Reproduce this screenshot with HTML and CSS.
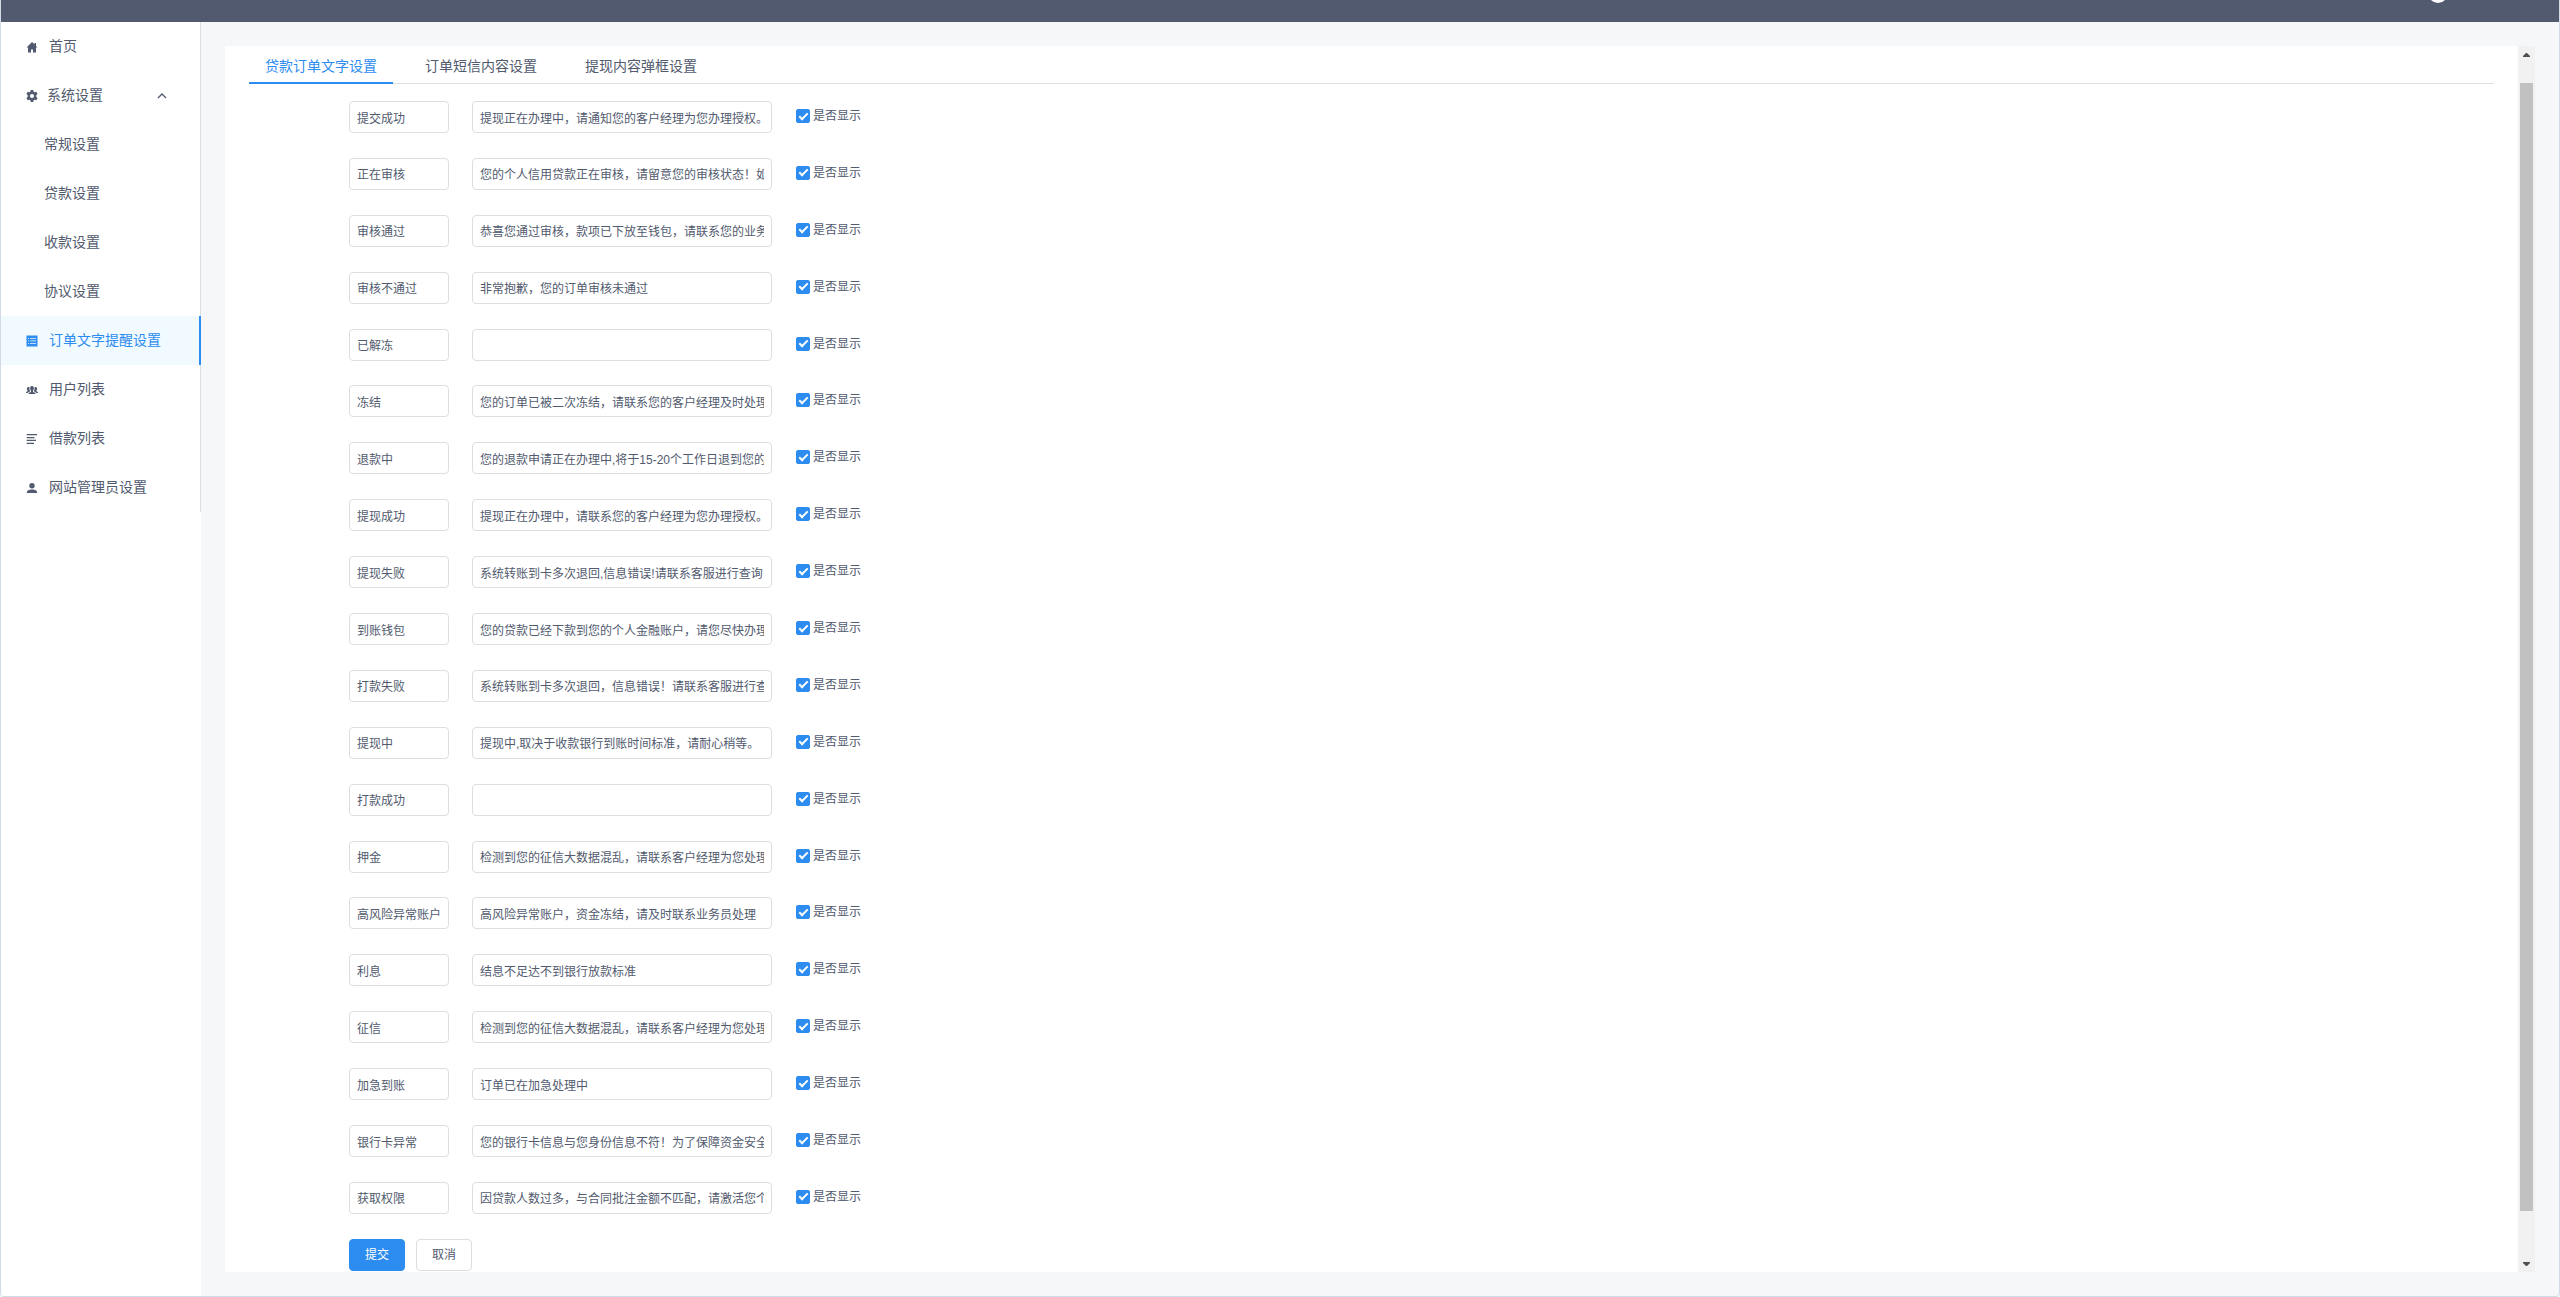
FILE: index.html
```html
<!DOCTYPE html>
<html lang="zh-CN">
<head>
    <meta charset="UTF-8">
    <meta name="viewport" content="width=device-width, initial-scale=1.0">
    <title>订单文字提醒设置</title>
    <link rel="stylesheet" href="styles.css">
</head>
<body>

<div class="layout">
    <header class="header">
        <span class="avatar"></span>
    </header>

    <div class="main">
        <!-- 侧边菜单 -->
        <aside class="sider">
            <nav class="menu">
                <a href="#" class="menu-item">
                    <svg class="icon" viewBox="0 0 12 12"><path d="M6 1 .5 6.500H2v5h3v-3h2v3h3v-5h1.500L10 5V2H8.500v1.300z"/></svg>
                    <span>首页</span>
                </a>
                <a href="#" class="menu-item menu-parent">
                    <svg class="icon" viewBox="0 0 12 12"><path fill-rule="evenodd" d="M4.700 0h2.600l.3 1.700 1.100.6 1.600-.6 1.300 2.300-1.300 1.100v1.800l1.300 1.100-1.300 2.300-1.600-.6-1.100.6-.3 1.700H4.700l-.3-1.700-1.100-.6-1.600.6L.4 8l1.300-1.100V5.100L.4 4l1.300-2.300 1.600.6 1.100-.6zM6 3.900a2.100 2.100 0 1 0 0 4.200 2.100 2.100 0 0 0 0-4.200z"/></svg>
                    <span>系统设置</span>
                    <svg class="arrow" viewBox="0 0 10 6"><path d="M1 5l4-4 4 4"/></svg>
                </a>
                <a href="#" class="menu-item menu-sub">常规设置</a>
                <a href="#" class="menu-item menu-sub">贷款设置</a>
                <a href="#" class="menu-item menu-sub">收款设置</a>
                <a href="#" class="menu-item menu-sub">协议设置</a>
                <a href="#" class="menu-item active">
                    <svg class="icon" viewBox="0 0 12 12"><path fill-rule="evenodd" d="M.5.500h11v11H.500zM2 3v.7h1V3zm2 0v.7h6V3zM2 5.600v.7h1v-.7zm2 0v.7h6v-.7zM2 8.200v.7h1v-.7zm2 0v.7h6v-.7z"/></svg>
                    <span>订单文字提醒设置</span>
                </a>
                <a href="#" class="menu-item">
                    <svg class="icon" viewBox="0 0 12 12"><path d="M6 2c1.200 0 1.900.9 1.900 2.100S7.300 6.500 7 6.800V8c1 .4 2.500.6 2.500 2h-7c0-1.400 1.500-1.600 2.500-2V6.800c-.3-.3-.9-1.500-.9-2.700S4.800 2 6 2zM2.500 3c.5 0 .8.1 1 .4-.2 1.600.1 2.600.6 3.500v.7C3 8 2.200 8.300 1.900 9H0c0-1.100.8-1.400 1.600-1.700v-.8C1 6 .9 5.500.9 4.800c0-1 .6-1.800 1.600-1.800zM9.500 3c-.5 0-.8.1-1 .4.2 1.600-.1 2.600-.6 3.500v.7c1.100.4 1.900.7 2.200 1.400H12c0-1.100-.8-1.400-1.600-1.700v-.8c.6-.5.7-1 .7-1.700 0-1-.6-1.800-1.600-1.800z"/></svg>
                    <span>用户列表</span>
                </a>
                <a href="#" class="menu-item">
                    <svg class="icon" viewBox="0 0 12 12"><path d="M.7 1h10.300v1.300H.700zM.7 3.900h7.800v1.300H.700zM.7 6.800h9.300v1.300H.700zM.7 9.700h7.300v1.300H.700z"/></svg>
                    <span>借款列表</span>
                </a>
                <a href="#" class="menu-item">
                    <svg class="icon" viewBox="0 0 12 12"><path d="M6 1a2.700 2.700 0 0 1 0 5.400A2.700 2.700 0 0 1 6 1zM.7 11c0-2.600 2.300-3.600 5.300-3.600s5.300 1 5.300 3.600z"/></svg>
                    <span>网站管理员设置</span>
                </a>
            </nav>
        </aside>

        <main class="content">
            <div class="panel">
                <div class="tabs">
                    <button type="button" class="tab current">贷款订单文字设置</button>
                    <button type="button" class="tab">订单短信内容设置</button>
                    <button type="button" class="tab">提现内容弹框设置</button>
                </div>

                <form class="form" id="textForm">
                    <div class="actions">
                        <button type="submit" class="btn btn-primary">提交</button>
                        <button type="button" class="btn">取消</button>
                    </div>
                </form>
            </div>

            <!-- 滚动条 -->
            <div class="scrollbar">
                <button type="button" class="scroll-btn" aria-label="向上滚动"><svg viewBox="0 0 7 4"><path d="M0 4V3l3-3h1l3 3v1z"/></svg></button>
                <div class="thumb"></div>
                <button type="button" class="scroll-btn" aria-label="向下滚动"><svg viewBox="0 0 7 4"><path d="M0 0v1l3 3h1l3-3V0z"/></svg></button>
            </div>
        </main>
    </div>
</div>

<script src="script.js"></script>
</body>
</html>
```

FILE: styles.css
```css
* {
    box-sizing: border-box;
}

body {
    margin: 0;
    font-family: "Liberation Sans", "Noto Sans CJK SC", sans-serif;
    font-size: 12px;
    line-height: 18px;
    color: #515a6e;
}

button,
input {
    font: inherit;
    color: inherit;
    margin: 0;
}

button {
    cursor: pointer;
}

.layout {
    display: flex;
    flex-direction: column;
    height: 100vh;
    border: 1px solid #d3dce6;
    border-top: none;
    border-radius: 0 0 4px 4px;
    background: #f5f7f9;
    overflow: hidden;
}

/* 顶部 */
.header {
    display: flex;
    justify-content: flex-end;
    align-items: flex-end;
    flex: none;
    height: 22px;
    padding: 0 111px 19px 0;
    background: #515a6e;
    overflow: hidden;
}

.avatar {
    flex: none;
    width: 20px;
    height: 20px;
    border-radius: 50%;
    background: #fff;
}

.main {
    display: flex;
    flex: 1;
    min-height: 0;
}

/* 菜单 */
.sider {
    flex: none;
    width: 200px;
    background: #fff;
}

.menu {
    border-right: 1px solid #dcdee2;
}

.menu-item {
    display: flex;
    align-items: center;
    height: 49px;
    padding: 0 24px 0 25px;
    font-size: 14px;
    line-height: 21px;
    color: #515a6e;
    text-decoration: none;
}

.icon {
    width: 12px;
    height: 12px;
    margin-right: 11px;
    fill: currentColor;
}

.menu-parent .icon {
    margin-right: 9px;
}

.menu-sub {
    padding-left: 43px;
}

.arrow {
    width: 10px;
    height: 6px;
    margin-left: auto;
    margin-right: 9px;
    fill: none;
    stroke: currentColor;
    stroke-width: 1.3;
}

.menu-item.active {
    margin-right: -1px;
    border-right: 2px solid #2d8cf0;
    background: #f0faff;
    color: #2d8cf0;
}

/* 内容 */
.content {
    display: flex;
    flex: 1;
    min-width: 0;
    padding: 24px;
}

.panel {
    display: flex;
    flex-direction: column;
    flex: 1;
    min-width: 0;
    padding: 0 24px 1px;
    background: #fff;
    overflow: auto;
    scrollbar-width: none;
}

.tabs {
    display: flex;
    flex: none;
    gap: 16px;
    height: 38px;
    border-bottom: 1px solid #dcdee2;
}

.tab {
    height: 38px;
    padding: 4px 16px 0;
    border: none;
    border-bottom: 2px solid transparent;
    background: none;
    font-size: 14px;
    line-height: 21px;
}

.tab.current {
    border-color: #2d8cf0;
    color: #2d8cf0;
}

.form {
    display: flex;
    flex-direction: column;
    flex: 1;
    justify-content: space-between;
    gap: 24px;
    padding: 17px 0 0 100px;
}

.row {
    display: flex;
    gap: 23px;
}

.input {
    height: 32px;
    padding: 4px 7px;
    border: 1px solid #dcdee2;
    border-radius: 4px;
    background: #fff;
}

.input:focus {
    border-color: #57a3f3;
    outline: none;
}

.name {
    width: 100px;
}

.text {
    width: 300px;
}

.check {
    display: flex;
    align-items: center;
    gap: 3px;
    height: 30px;
    padding-left: 1px;
    cursor: pointer;
}

.check input {
    display: grid;
    place-items: center;
    width: 14px;
    height: 14px;
    border: 1px solid #dcdee2;
    border-radius: 2px;
    appearance: none;
}

.check input:checked {
    border-color: #2d8cf0;
    background: #2d8cf0;
}

.check input:checked::after {
    content: "";
    box-sizing: border-box;
    width: 5px;
    height: 9px;
    margin-bottom: 2px;
    border: solid #fff;
    border-width: 0 2px 2px 0;
    transform: rotate(45deg);
}

.actions {
    display: flex;
    gap: 11px;
}

.btn {
    height: 32px;
    padding: 0 15px;
    border: 1px solid #dcdee2;
    border-radius: 4px;
    background: #fff;
}

.btn-primary {
    border-color: #2d8cf0;
    background: #2d8cf0;
    color: #fff;
}

.scrollbar {
    display: flex;
    flex-direction: column;
    flex: none;
    width: 17px;
    background: #f1f1f1;
}

.scroll-btn {
    display: grid;
    place-items: center;
    height: 17px;
    padding: 0;
    border: none;
    background: none;
}

.scroll-btn svg {
    width: 7px;
    height: 4px;
    fill: #505050;
}

.thumb {
    flex: 1;
    margin: 20px 2px 44px;
    background: #c1c1c1;
}
```

FILE: script.js
```js
const rows = [
    ["提交成功", "提现正在办理中，请通知您的客户经理为您办理授权。"],
    ["正在审核", "您的个人信用贷款正在审核，请留意您的审核状态！如"],
    ["审核通过", "恭喜您通过审核，款项已下放至钱包，请联系您的业务"],
    ["审核不通过", "非常抱歉，您的订单审核未通过"],
    ["已解冻", ""],
    ["冻结", "您的订单已被二次冻结，请联系您的客户经理及时处理"],
    ["退款中", "您的退款申请正在办理中,将于15-20个工作日退到您的"],
    ["提现成功", "提现正在办理中，请联系您的客户经理为您办理授权。"],
    ["提现失败", "系统转账到卡多次退回,信息错误!请联系客服进行查询"],
    ["到账钱包", "您的贷款已经下款到您的个人金融账户，请您尽快办理"],
    ["打款失败", "系统转账到卡多次退回，信息错误！请联系客服进行查"],
    ["提现中", "提现中,取决于收款银行到账时间标准，请耐心稍等。"],
    ["打款成功", ""],
    ["押金", "检测到您的征信大数据混乱，请联系客户经理为您处理"],
    ["高风险异常账户", "高风险异常账户，资金冻结，请及时联系业务员处理"],
    ["利息", "结息不足达不到银行放款标准"],
    ["征信", "检测到您的征信大数据混乱，请联系客户经理为您处理"],
    ["加急到账", "订单已在加急处理中"],
    ["银行卡异常", "您的银行卡信息与您身份信息不符！为了保障资金安全"],
    ["获取权限", "因贷款人数过多，与合同批注金额不匹配，请激活您个"]
];

const form = document.getElementById("textForm");
const actions = form.querySelector(".actions");

rows.forEach(([name, text], i) => {
    const row = document.createElement("div");
    row.className = "row";
    row.innerHTML = `
        <input type="text" class="input name" name="name${i}" aria-label="状态名称" value="${name}">
        <input type="text" class="input text" name="text${i}" aria-label="提醒文字" value="${text}">
        <label class="check"><input type="checkbox" name="show${i}" checked>是否显示</label>
    `;
    form.insertBefore(row, actions);
});

form.addEventListener("submit", (event) => event.preventDefault());
```
